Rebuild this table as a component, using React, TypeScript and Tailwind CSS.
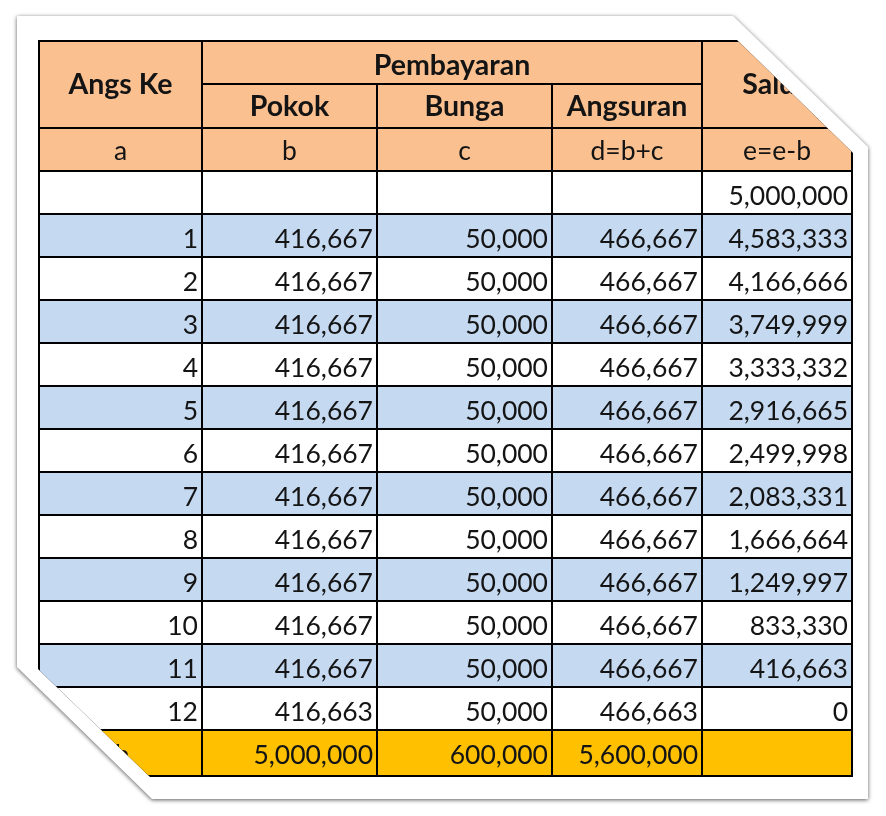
import React from "react";

const rows: [string, string, string, string, string][] = [
  ["1", "416,667", "50,000", "466,667", "4,583,333"],
  ["2", "416,667", "50,000", "466,667", "4,166,666"],
  ["3", "416,667", "50,000", "466,667", "3,749,999"],
  ["4", "416,667", "50,000", "466,667", "3,333,332"],
  ["5", "416,667", "50,000", "466,667", "2,916,665"],
  ["6", "416,667", "50,000", "466,667", "2,499,998"],
  ["7", "416,667", "50,000", "466,667", "2,083,331"],
  ["8", "416,667", "50,000", "466,667", "1,666,664"],
  ["9", "416,667", "50,000", "466,667", "1,249,997"],
  ["10", "416,667", "50,000", "466,667", "833,330"],
  ["11", "416,667", "50,000", "466,667", "416,663"],
  ["12", "416,663", "50,000", "466,663", "0"],
];

function Num({ v, bg, h = "h-[41px]", pb = "pb-[5px]" }: { v: string; bg: string; h?: string; pb?: string }) {
  return (
    <div className={`${bg} ${h} ${pb} flex items-end justify-end pr-[3px] leading-none text-[26.5px]`}>
      {v}
    </div>
  );
}

export default function App() {
  return (
    <div
      className="min-h-screen w-[886px] bg-white pt-[16px] pl-[17px] text-[#141414]"
      style={{ fontFamily: "Lato, 'Open Sans', sans-serif" }}
    >
      <div className="w-[851px] [filter:drop-shadow(0_1px_2px_rgba(0,0,0,0.65))]">
        <div className="bg-white pl-[21px] pt-[24px] pr-[15px] pb-[22px] [clip-path:polygon(0_0,716px_0,100%_131px,100%_100%,135px_100%,0_calc(100%_-_132px))]">
          <div className="w-[815px] grid grid-cols-[161px_173px_173px_148px_148px] grid-rows-[41px_42px] gap-[2px] bg-black p-[2px] [clip-path:polygon(0_0,calc(100%_-_116px)_0,100%_113px,100%_100%,112px_100%,0_calc(100%_-_108px))]">
            {/* header */}
            <div className="row-span-2 bg-[#FAC090] flex items-center justify-center font-bold text-[28.5px] leading-none pb-[2px]">
              Angs Ke
            </div>
            <div className="col-span-3 bg-[#FAC090] flex items-center justify-center font-bold text-[28.5px] leading-none pt-[4px]">
              Pembayaran
            </div>
            <div className="row-span-2 bg-[#FAC090] flex items-center justify-center font-bold text-[28.5px] leading-none pb-[2px]">
              Saldo
            </div>
            <div className="bg-[#FAC090] flex items-center justify-center font-bold text-[28.5px] leading-none pb-[2px]">
              Pokok
            </div>
            <div className="bg-[#FAC090] flex items-center justify-center font-bold text-[28.5px] leading-none pb-[2px]">
              Bunga
            </div>
            <div className="bg-[#FAC090] flex items-center justify-center font-bold text-[28.5px] leading-none pb-[2px]">
              Angsuran
            </div>
            {/* sub header */}
            {["a", "b", "c", "d=b+c", "e=e-b"].map((t) => (
              <div
                key={t}
                className="h-[41px] bg-[#FAC090] flex items-end justify-center pb-[7px] leading-none text-[26.5px]"
              >
                {t}
              </div>
            ))}
            {/* blank row */}
            <div className="h-[41px] bg-white" />
            <div className="h-[41px] bg-white" />
            <div className="h-[41px] bg-white" />
            <div className="h-[41px] bg-white" />
            <Num v="5,000,000" bg="bg-white" />
            {rows.map((r, i) => {
              const bg = i % 2 === 0 ? "bg-[#C5D9F1]" : "bg-white";
              return (
                <React.Fragment key={r[0]}>
                  {r.map((v, j) => (
                    <Num key={j} v={v} bg={bg} />
                  ))}
                </React.Fragment>
              );
            })}
            {/* total */}
            <div className="h-[44px] bg-[#FFC000] flex items-end justify-start pl-[8px] pb-[8px] leading-none text-[26.5px]">
              Jumlah
            </div>
            <Num v="5,000,000" bg="bg-[#FFC000]" h="h-[44px]" pb="pb-[8px]" />
            <Num v="600,000" bg="bg-[#FFC000]" h="h-[44px]" pb="pb-[8px]" />
            <Num v="5,600,000" bg="bg-[#FFC000]" h="h-[44px]" pb="pb-[8px]" />
            <div className="h-[44px] bg-[#FFC000]" />
          </div>
        </div>
      </div>
    </div>
  );
}
